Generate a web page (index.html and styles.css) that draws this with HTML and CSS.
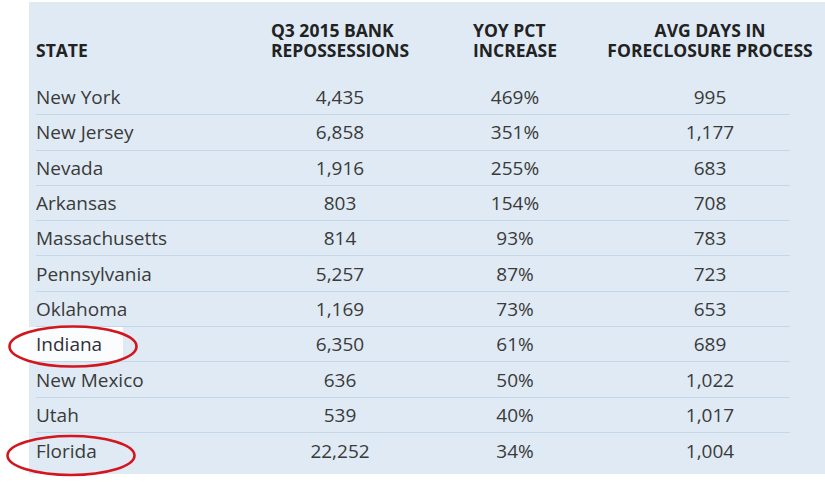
FILE: index.html
```html
<!DOCTYPE html>
<html>
<head>
<meta charset="utf-8">
<link rel="stylesheet" href="styles.css">
</head>
<body>
<div class="page">
  <div class="panel">
    <div class="table">
      <div class="head">
        <div class="hcell state">STATE</div>
        <div class="hcell"><span>Q3 2015 BANK<br>REPOSSESSIONS</span></div>
        <div class="hcell"><span>YOY PCT<br>INCREASE</span></div>
        <div class="hcell c4"><span class="center">AVG DAYS IN<br>FORECLOSURE PROCESS</span></div>
      </div>
      <div class="row"><div>New York</div><div>4,435</div><div>469%</div><div class="c4">995</div></div>
      <div class="row"><div>New Jersey</div><div>6,858</div><div>351%</div><div class="c4">1,177</div></div>
      <div class="row"><div>Nevada</div><div>1,916</div><div>255%</div><div class="c4">683</div></div>
      <div class="row"><div>Arkansas</div><div>803</div><div>154%</div><div class="c4">708</div></div>
      <div class="row"><div>Massachusetts</div><div>814</div><div>93%</div><div class="c4">783</div></div>
      <div class="row"><div>Pennsylvania</div><div>5,257</div><div>87%</div><div class="c4">723</div></div>
      <div class="row"><div>Oklahoma</div><div>1,169</div><div>73%</div><div class="c4">653</div></div>
      <div class="row"><div class="hl"><span>Indiana</span></div><div>6,350</div><div>61%</div><div class="c4">689</div></div>
      <div class="row"><div>New Mexico</div><div>636</div><div>50%</div><div class="c4">1,022</div></div>
      <div class="row"><div>Utah</div><div>539</div><div>40%</div><div class="c4">1,017</div></div>
      <div class="row last"><div>Florida</div><div>22,252</div><div>34%</div><div class="c4">1,004</div></div>
    </div>
  </div>
  <svg class="marks" width="825" height="489" viewBox="0 0 825 489">
    <ellipse cx="73" cy="344.5" rx="63.5" ry="20" fill="none" stroke="#d3161e" stroke-width="2.6"/>
    <ellipse cx="71" cy="453.5" rx="63.5" ry="19.5" fill="none" stroke="#d3161e" stroke-width="2.6"/>
  </svg>
</div>
</body>
</html>
```
FILE: styles.css
```css
html, body {
  margin: 0;
  padding: 0;
  background: #ffffff;
}
.page {
  position: relative;
  width: 825px;
  height: 489px;
  font-family: "Open Sans", "Noto Sans", sans-serif;
}
.panel {
  margin-left: 29px;
  margin-top: 2px;
  width: 796px;
  height: 472px;
  background: #dfeaf4;
  box-sizing: border-box;
  padding: 0 0 0 7px;
}
.table {
  width: 754px;
}
.head,
.row {
  display: grid;
  grid-template-columns: 234px 140px 210px 170px;
}
.head {
  padding: 18px 0 20px;
  font-weight: 700;
  font-size: 17.5px;
  line-height: 20px;
  color: #222222;
}
.hcell {
  display: flex;
  justify-content: center;
  align-items: flex-end;
  white-space: nowrap;
}
.hcell span {
  text-align: left;
}
.hcell span.center {
  text-align: center;
}
.hcell.state {
  justify-content: flex-start;
}
.hcell.c4 {
  padding-left: 10px;
}
.row {
  height: 35.3px;
  box-sizing: border-box;
  border-bottom: 1px solid #c3d7e9;
  font-size: 19px;
  color: #3a3a3a;
  align-items: center;
}
.row.last {
  border-bottom: none;
}
.row > div {
  text-align: center;
}
.row > div:first-child {
  text-align: left;
}
.row > div.c4 {
  padding-left: 10px;
}
.row > div.hl {
  align-self: stretch;
  margin-left: -7px;
  width: 94px;
  background: #fbfcfd;
  display: flex;
  align-items: center;
  padding-left: 7px;
  box-sizing: border-box;
  color: #2f2f3a;
}
.marks {
  position: absolute;
  left: 0;
  top: 0;
  pointer-events: none;
}
```
